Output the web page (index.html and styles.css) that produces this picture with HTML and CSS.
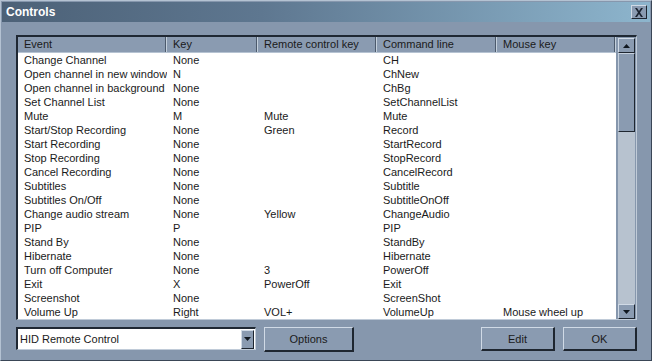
FILE: index.html
```html
<!DOCTYPE html>
<html lang="en">
<head>
    <meta charset="UTF-8">
    <title>Controls</title>
    <link rel="stylesheet" href="styles.css">
</head>
<body>
    <div class="window">
        <div class="titlebar">
            <span class="title">Controls</span>
            <span class="close">
                <svg width="10" height="9" viewBox="0 0 10 9"><path d="M1 0h2l2 3 2-3h2L6 4.5 9 9H7L5 6 3 9H1l3-4.5z" fill="#1a2330"/></svg>
            </span>
        </div>
        <div class="content">
            <div class="listbox">
                <div class="list">
                    <div class="row head">
                        <div>Event</div><div>Key</div><div>Remote control key</div><div>Command line</div><div>Mouse key</div>
                    </div>
                    <div class="row"><div>Change Channel</div><div>None</div><div></div><div>CH</div><div></div></div>
                    <div class="row"><div>Open channel in new window</div><div>N</div><div></div><div>ChNew</div><div></div></div>
                    <div class="row"><div>Open channel in background</div><div>None</div><div></div><div>ChBg</div><div></div></div>
                    <div class="row"><div>Set Channel List</div><div>None</div><div></div><div>SetChannelList</div><div></div></div>
                    <div class="row"><div>Mute</div><div>M</div><div>Mute</div><div>Mute</div><div></div></div>
                    <div class="row"><div>Start/Stop Recording</div><div>None</div><div>Green</div><div>Record</div><div></div></div>
                    <div class="row"><div>Start Recording</div><div>None</div><div></div><div>StartRecord</div><div></div></div>
                    <div class="row"><div>Stop Recording</div><div>None</div><div></div><div>StopRecord</div><div></div></div>
                    <div class="row"><div>Cancel Recording</div><div>None</div><div></div><div>CancelRecord</div><div></div></div>
                    <div class="row"><div>Subtitles</div><div>None</div><div></div><div>Subtitle</div><div></div></div>
                    <div class="row"><div>Subtitles On/Off</div><div>None</div><div></div><div>SubtitleOnOff</div><div></div></div>
                    <div class="row"><div>Change audio stream</div><div>None</div><div>Yellow</div><div>ChangeAudio</div><div></div></div>
                    <div class="row"><div>PIP</div><div>P</div><div></div><div>PIP</div><div></div></div>
                    <div class="row"><div>Stand By</div><div>None</div><div></div><div>StandBy</div><div></div></div>
                    <div class="row"><div>Hibernate</div><div>None</div><div></div><div>Hibernate</div><div></div></div>
                    <div class="row"><div>Turn off Computer</div><div>None</div><div>3</div><div>PowerOff</div><div></div></div>
                    <div class="row"><div>Exit</div><div>X</div><div>PowerOff</div><div>Exit</div><div></div></div>
                    <div class="row"><div>Screenshot</div><div>None</div><div></div><div>ScreenShot</div><div></div></div>
                    <div class="row"><div>Volume Up</div><div>Right</div><div>VOL+</div><div>VolumeUp</div><div>Mouse wheel up</div></div>
                </div>
                <div class="scrollbar">
                    <div class="sb-btn">
                        <svg width="7" height="4" viewBox="0 0 7 4"><path d="M3.5 0L7 4H0z" fill="#101820"/></svg>
                    </div>
                    <div class="sb-thumb"></div>
                    <div class="sb-track"></div>
                    <div class="sb-btn">
                        <svg width="7" height="4" viewBox="0 0 7 4"><path d="M0 0h7L3.5 4z" fill="#101820"/></svg>
                    </div>
                </div>
            </div>
            <div class="footer">
                <div class="combo">
                    <span class="combo-text">HID Remote Control</span>
                    <span class="combo-btn">
                        <svg width="7" height="4" viewBox="0 0 7 4"><path d="M0 0h7L3.5 4z" fill="#101820"/></svg>
                    </span>
                </div>
                <div class="btn btn-options">Options</div>
                <div class="spacer"></div>
                <div class="btn">Edit</div>
                <div class="btn">OK</div>
            </div>
        </div>
    </div>
</body>
</html>
```

FILE: styles.css
```css
body {
    margin: 0;
    font-family: 'Liberation Sans', Arial, sans-serif;
    font-size: 11px;
    color: #1a1a1a;
}

.window {
    width: 652px;
    height: 361px;
    box-sizing: border-box;
    background-color: #8697ad;
    border-top: 1px solid #b4c2d2;
    border-left: 1px solid #b4c2d2;
    border-right: 1px solid #3a4656;
    border-bottom: 1px solid #3a4656;
    display: flex;
    flex-direction: column;
}

.titlebar {
    height: 20px;
    margin: 1px 1px 0 1px;
    display: flex;
    align-items: center;
    justify-content: space-between;
    padding: 0 3px 0 4px;
    background: linear-gradient(to right, #4c6177 0%, #5e7790 40%, #8db5cd 100%);
}

.title {
    color: #fff;
    font-weight: bold;
    font-size: 12px;
}

.close {
    width: 14px;
    height: 12px;
    display: flex;
    align-items: center;
    justify-content: center;
    background-color: #8a9bb1;
    border-top: 1px solid #d0dae6;
    border-left: 1px solid #d0dae6;
    border-right: 1px solid #1e2630;
    border-bottom: 1px solid #1e2630;
}

.content {
    flex: 1;
    padding: 13px 14px 0 15px;
    display: flex;
    flex-direction: column;
}

.listbox {
    height: 285px;
    box-sizing: border-box;
    display: flex;
    border-top: 2px solid #1f2833;
    border-left: 2px solid #1f2833;
    border-right: 1px solid #c0cbd8;
    border-bottom: 1px solid #c0cbd8;
    background-color: #fff;
}

.list {
    flex: 1;
    display: flex;
    flex-direction: column;
}

.row {
    display: grid;
    grid-template-columns: 149px 91px 119px 120px 1fr;
    height: 14px;
    line-height: 14px;
}

.row div {
    padding-left: 6px;
    white-space: nowrap;
    overflow: hidden;
}

.row.head {
    height: 15px;
    line-height: 15px;
    background-color: #8a9bb1;
    border-bottom: 1px solid #b6c3d2;
}

.row.head div {
    border-right: 1px solid #c4d0dc;
    box-shadow: inset -1px 0 0 #4c5a6c;
}

.scrollbar {
    width: 17px;
    display: flex;
    flex-direction: column;
    background-color: #8697ad;
    padding: 1px 1px 0 2px;
}

.sb-btn {
    height: 13px;
    display: flex;
    align-items: center;
    justify-content: center;
    background-color: #8a9bb1;
    border-top: 1px solid #d0dae6;
    border-left: 1px solid #d0dae6;
    border-right: 1px solid #1e2630;
    border-bottom: 1px solid #1e2630;
}

.sb-thumb {
    height: 77px;
    background-color: #8a9bb1;
    border-top: 1px solid #c6d1de;
    border-left: 1px solid #c6d1de;
    border-right: 1px solid #1e2630;
    border-bottom: 1px solid #1e2630;
}

.sb-track {
    flex: 1;
    background-color: #b7c2cf;
}

.footer {
    margin-top: 7px;
    display: flex;
    align-items: flex-start;
    gap: 8px;
}

.combo {
    width: 240px;
    height: 23px;
    box-sizing: border-box;
    display: flex;
    align-items: center;
    background-color: #fff;
    border-top: 2px solid #1f2833;
    border-left: 2px solid #1f2833;
    border-right: 1px solid #c0cbd8;
    border-bottom: 1px solid #c0cbd8;
}

.combo-text {
    flex: 1;
    padding-left: 2px;
}

.combo-btn {
    width: 11px;
    height: 17px;
    margin-right: 1px;
    display: flex;
    align-items: center;
    justify-content: center;
    background-color: #8a9bb1;
    border-top: 1px solid #d0dae6;
    border-left: 1px solid #d0dae6;
    border-right: 1px solid #1e2630;
    border-bottom: 1px solid #1e2630;
}

.btn {
    width: 74px;
    height: 24px;
    box-sizing: border-box;
    display: flex;
    align-items: center;
    justify-content: center;
    background-color: #8a9bb1;
    border-top: 1px solid #d0dae6;
    border-left: 1px solid #d0dae6;
    border-right: 2px solid #1e2630;
    border-bottom: 2px solid #1e2630;
}

.btn-options {
    width: 90px;
    height: 25px;
}

.spacer {
    flex: 1;
}
```
